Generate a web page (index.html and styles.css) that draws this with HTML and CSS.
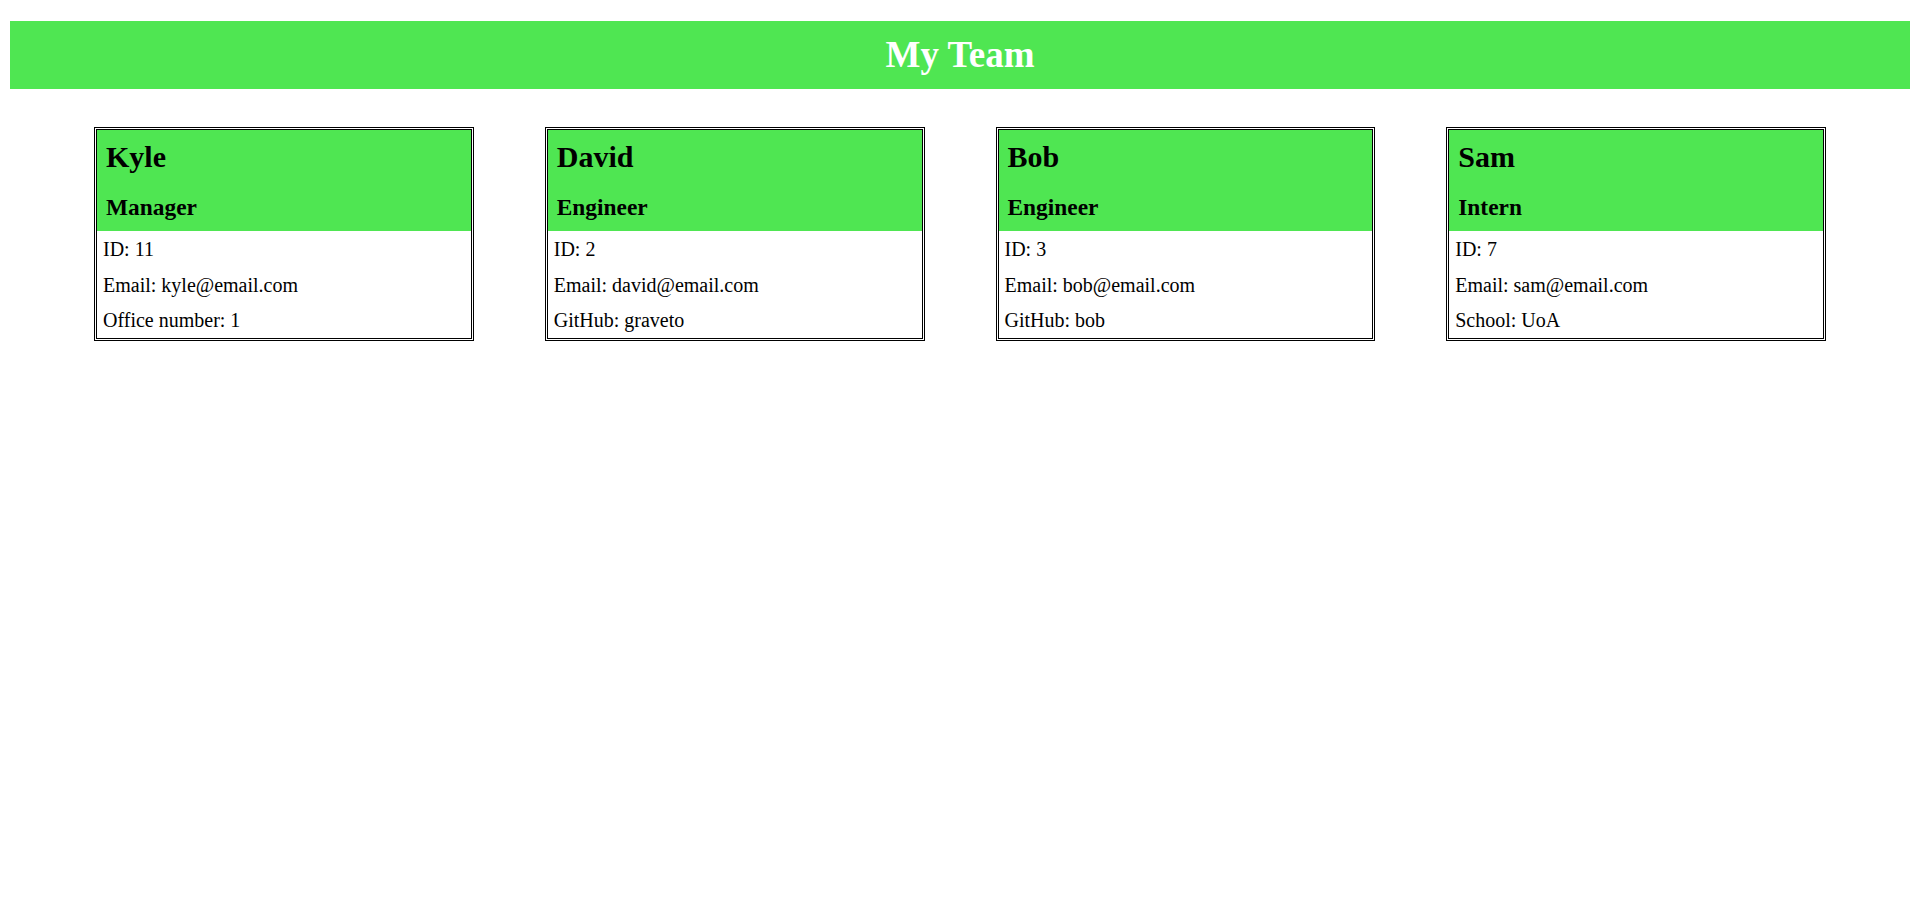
FILE: index.html
```html
<!DOCTYPE html>
<html lang="en">
<head>
<meta charset="UTF-8">
<title>My Team</title>
<link rel="stylesheet" href="styles.css">
</head>
<body>
<header class="banner"><h1 class="banner-title">My Team</h1></header>
<main class="team">
  <section class="card">
    <div class="card-head"><h2 class="card-name">Kyle</h2><h3 class="card-role">Manager</h3></div>
    <div class="card-body"><p class="card-line">ID: 11</p><p class="card-line">Email: kyle@email.com</p><p class="card-line">Office number: 1</p></div>
  </section>
  <section class="card">
    <div class="card-head"><h2 class="card-name">David</h2><h3 class="card-role">Engineer</h3></div>
    <div class="card-body"><p class="card-line">ID: 2</p><p class="card-line">Email: david@email.com</p><p class="card-line">GitHub: graveto</p></div>
  </section>
  <section class="card">
    <div class="card-head"><h2 class="card-name">Bob</h2><h3 class="card-role">Engineer</h3></div>
    <div class="card-body"><p class="card-line">ID: 3</p><p class="card-line">Email: bob@email.com</p><p class="card-line">GitHub: bob</p></div>
  </section>
  <section class="card">
    <div class="card-head"><h2 class="card-name">Sam</h2><h3 class="card-role">Intern</h3></div>
    <div class="card-body"><p class="card-line">ID: 7</p><p class="card-line">Email: sam@email.com</p><p class="card-line">School: UoA</p></div>
  </section>
</main>
</body>
</html>
```
FILE: styles.css
```css
html, body {
  background: #ffffff;
}
body {
  margin: 21px 10px 0;
  font-family: "Liberation Serif", "Times New Roman", serif;
  color: #000;
}
.banner {
  height: 68px;
  background: #4fe652;
  display: flex;
  align-items: center;
  justify-content: center;
}
.banner-title {
  margin: 0;
  font-size: 37px;
  font-weight: bold;
  color: #fff;
  line-height: 42px;
}
.team {
  display: flex;
  gap: 71px;
  padding: 0 84px;
  margin-top: 38px;
  align-items: flex-start;
}
.card {
  flex: 1 1 0;
  border: 3px double #000;
  font-size: 20px;
}
.card-head {
  background: #4fe652;
  padding: 10px 9px 10px;
}
.card-name {
  margin: 0 0 20px;
  font-size: 30px;
  line-height: 34px;
}
.card-role {
  margin: 0;
  font-size: 23.4px;
  line-height: 27px;
}
.card-body {
  padding: 7px 6px 6px;
}
.card-line {
  margin: 0 0 12.5px;
  line-height: 23px;
}
.card-line:last-child {
  margin-bottom: 0;
}
```
